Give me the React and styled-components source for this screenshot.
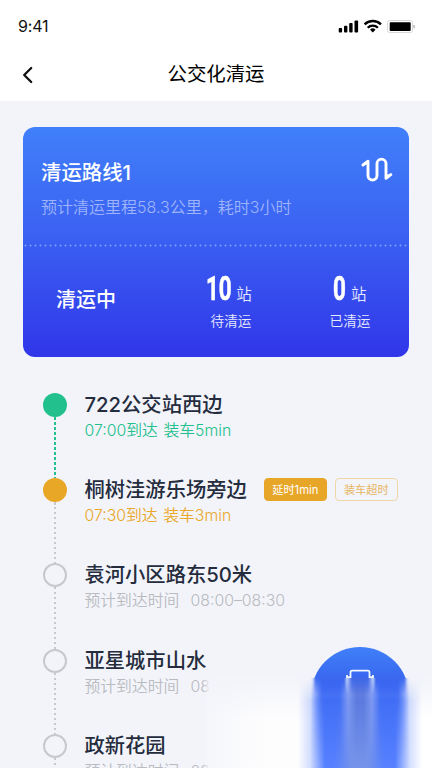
import styled, { createGlobalStyle } from 'styled-components';

const GlobalStyle = createGlobalStyle`
  * {
    box-sizing: border-box;
  }
  body {
    margin: 0;
    background: #f3f4fa;
    font-family: Inter, 'Noto Sans CJK SC', sans-serif;
    overflow: hidden;
  }
`;

const Screen = styled.div`
  position: relative;
  width: 432px;
  height: 768px;
  overflow: hidden;
  background: #f3f4fa;
`;

const Header = styled.header`
  height: 101px;
  background: #fff;
`;

const StatusBar = styled.div`
  display: flex;
  align-items: center;
  justify-content: space-between;
  height: 52px;
  padding: 0 16px 0 18px;
`;

const Clock = styled.span`
  font-size: 16px;
  line-height: 20px;
  letter-spacing: -0.2px;
  color: #111;
`;

const StatusIcons = styled.svg`
  width: 78px;
  height: 16px;
`;

const NavBar = styled.div`
  display: grid;
  grid-template-columns: 56px 1fr 56px;
  align-items: center;
  height: 43px;
`;

const BackIcon = styled.svg`
  width: 14px;
  height: 20px;
  margin: 2px 0 0 21px;
`;

const PageTitle = styled.h1`
  margin: 0;
  font-size: 19.4px;
  line-height: 28px;
  font-weight: 400;
  text-align: center;
  color: #000;
`;

const Card = styled.section`
  width: 386px;
  height: 230px;
  margin: 26px 0 0 23px;
  border-radius: 12px;
  background: linear-gradient(180deg, #4080fa 0%, #3b62f2 45%, #3036e9 100%);
  color: #fff;
`;

const CardTop = styled.div`
  display: flex;
  justify-content: space-between;
  height: 120px;
  padding: 30px 16px 0 18px;
  background: radial-gradient(circle, rgba(160, 190, 255, 0.65) 0.8px, transparent 1.2px)
    0 100% / 5px 3px repeat-x;
`;

const RouteName = styled.h2`
  margin: 0;
  font-size: 20.4px;
  line-height: 31px;
  font-weight: 500;
`;

const RouteDesc = styled.p`
  margin: 7px 0 0;
  font-size: 16px;
  line-height: 24px;
  font-weight: 350;
  color: #9fb4fa;
`;

const RouteIcon = styled.svg`
  width: 32px;
  height: 28px;
`;

const CardBottom = styled.div`
  display: grid;
  grid-template-columns: 148px 120px 118px;
  height: 110px;
`;

const RouteState = styled.div`
  padding: 38px 0 0 33px;
  font-size: 20px;
  line-height: 30px;
  font-weight: 500;
`;

const Stat = styled.div`
  display: flex;
  flex-direction: column;
  align-items: center;
  padding-top: 21px;
`;

const StatValue = styled.div`
  display: flex;
  align-items: baseline;
  height: 40px;
  line-height: 40px;
  margin-left: ${(props) => (props.$wide ? -4 : 0)}px;
`;

const StatNumber = styled.span`
  width: ${(props) => props.$digits * 12.6}px;
  font-family: Roboto, sans-serif;
  font-size: 34px;
  font-weight: 700;
  transform: scaleX(0.66);
  transform-origin: left;
  -webkit-text-stroke: 0.6px #fff;
`;

const StatUnit = styled.span`
  margin-left: 5px;
  font-size: 15.5px;
  font-weight: 350;
  color: #e6eaff;
`;

const StatLabel = styled.div`
  margin-top: 3px;
  font-size: 13.6px;
  line-height: 20px;
  font-weight: 350;
  color: #e6eaff;
`;

const Stops = styled.ul`
  margin: 36px 0 0;
  padding: 0 0 0 43px;
  list-style: none;
`;

const Stop = styled.li`
  display: flex;
  height: 85.2px;
`;

const Rail = styled.div`
  display: flex;
  flex-direction: column;
  align-items: center;
  width: 24px;
  margin-right: 17.5px;
`;

const Dot = styled.div`
  flex: none;
  width: 24px;
  height: 24px;
  border: 2px solid ${(props) => props.$color};
  border-radius: 50%;
  background: ${(props) => (props.$filled ? props.$color : 'transparent')};
`;

const Track = styled.div`
  flex: 1;
  width: 2px;
  background: repeating-linear-gradient(
    180deg,
    ${(props) => props.$color} 0 2.5px,
    transparent 2.5px 5px
  );
`;

const StopBody = styled.div`
  margin-top: -3px;
`;

const StopHead = styled.div`
  display: flex;
  align-items: center;
  height: 29px;
`;

const StopName = styled.h3`
  margin: 0;
  font-size: 20.3px;
  line-height: 29px;
  font-weight: 450;
  color: #242c3d;
  white-space: nowrap;
`;

const StopTime = styled.div`
  font-size: 15.8px;
  line-height: 24px;
  font-weight: 350;
  word-spacing: 1.2px;
  color: ${(props) => props.$color};
  white-space: pre;
`;

const Tag = styled.span`
  display: flex;
  align-items: center;
  justify-content: center;
  width: 63px;
  height: 23px;
  margin: -1px 0 0 ${(props) => (props.$outlined ? 8 : 17)}px;
  border: 1px solid ${(props) => (props.$outlined ? '#f0d5a6' : '#e8a628')};
  border-radius: 4px;
  background: ${(props) => (props.$outlined ? 'transparent' : '#e8a628')};
  color: ${(props) => (props.$outlined ? '#e6b662' : '#fff')};
  font-size: 11.2px;
  font-weight: 400;
`;

// soft cover fading out the lower right part of the list
const Haze = styled.div`
  position: absolute;
  left: 203px;
  top: 676px;
  width: 229px;
  height: 92px;
  background: linear-gradient(90deg, #f6f7fb 4%, #fdfdfe 26%, #fff 100%);
  mask-image: linear-gradient(90deg, transparent 0, #000 7px),
    linear-gradient(180deg, transparent 0, #000 4px);
  mask-composite: intersect;

  &::before {
    content: '';
    display: block;
    height: 44px;
    background: linear-gradient(180deg, #f3f4fa 10%, rgba(243, 244, 250, 0));
  }
`;

const ActionButton = styled.div`
  position: absolute;
  left: 311px;
  top: 647px;
  width: 98px;
  height: 31px;
  overflow: hidden;
`;

const ActionCircle = styled.div`
  display: flex;
  justify-content: center;
  width: 98px;
  height: 98px;
  padding-top: 22px;
  border-radius: 50%;
  background: linear-gradient(180deg, #3f80f7, #3a66f0 34%);
`;

const TruckIcon = styled.svg`
  width: 30px;
  height: 12px;
`;

const Beam = styled.div`
  position: absolute;
  left: 290px;
  top: 678px;
  width: 140px;
  height: 90px;
`;

const BeamLayer = styled.div`
  position: absolute;
  inset: 0;
  background: ${(props) => props.$fill};
  mask-image: ${(props) => props.$mask};
`;

const green = '#22c08c';
const amber = '#e9a727';
const grey = '#c6c8cc';

const stops = [
  { name: '722公交站西边', time: '07:00到达 装车5min', color: green, filled: true },
  {
    name: '桐树洼游乐场旁边',
    time: '07:30到达 装车3min',
    color: amber,
    filled: true,
    tags: ['延时1min', '装车超时'],
  },
  { name: '袁河小区路东50米', time: '预计到达时间  08:00–08:30' },
  { name: '亚星城市山水', time: '预计到达时间  08:00–08:30' },
  { name: '政新花园', time: '预计到达时间  08:00–08:30' },
];

const App = () => {
  return (
    <Screen>
      <GlobalStyle />
      <Header>
        <StatusBar>
          <Clock>9:41</Clock>
          <StatusIcons viewBox="0 0 78 16">
            <g fill="#000">
              <rect x="0.7" y="10" width="3.4" height="4.4" rx="1" />
              <rect x="6" y="7.8" width="3.4" height="6.6" rx="1" />
              <rect x="11.2" y="5" width="3.4" height="9.4" rx="1" />
              <rect x="16.5" y="2.4" width="3.6" height="12" rx="1" />
            </g>
            <g fill="none" stroke="#000" strokeWidth="2.3">
              <path d="M26.6 6.4a11.6 11.6 0 0 1 16.4 0" />
              <path d="M29.7 9.7a7.2 7.2 0 0 1 10.2 0" />
            </g>
            <path d="M34.8 14.4l-2.7-2.7a3.8 3.8 0 0 1 5.4 0z" fill="#000" />
            <rect x="49.5" y="2.5" width="25" height="12" rx="2" fill="none" stroke="#d8d8d8" />
            <rect x="51.7" y="4.2" width="21" height="8.8" rx="0.8" fill="#000" />
            <path d="M76 7v3.2" stroke="#aaa" strokeWidth="1.2" />
          </StatusIcons>
        </StatusBar>
        <NavBar>
          <BackIcon viewBox="0 0 14 20">
            <path
              d="M10.2 3L3.2 10l7 7"
              fill="none"
              stroke="#111"
              strokeWidth="2.3"
              strokeLinecap="round"
              strokeLinejoin="round"
            />
          </BackIcon>
          <PageTitle>公交化清运</PageTitle>
        </NavBar>
      </Header>

      <Card>
        <CardTop>
          <div>
            <RouteName>清运路线1</RouteName>
            <RouteDesc>预计清运里程58.3公里，耗时3小时</RouteDesc>
          </div>
          <RouteIcon viewBox="0 0 32 28">
            <path
              d="M2 8L7 4.2V18.6a4.5 4.5 0 0 0 9 0V6.6a4.5 4.5 0 0 1 9 0v14.8l4.8-3.8"
              fill="none"
              stroke="#fff"
              strokeWidth="2.9"
              strokeLinecap="round"
              strokeLinejoin="round"
            />
            <path d="M3 7.6L7 4.2v3.4zM25 21.4v-3.8h4.2z" fill="#fff" />
          </RouteIcon>
        </CardTop>
        <CardBottom>
          <RouteState>清运中</RouteState>
          <Stat>
            <StatValue $wide>
              <StatNumber $digits={2}>10</StatNumber>
              <StatUnit>站</StatUnit>
            </StatValue>
            <StatLabel>待清运</StatLabel>
          </Stat>
          <Stat>
            <StatValue>
              <StatNumber $digits={1}>0</StatNumber>
              <StatUnit>站</StatUnit>
            </StatValue>
            <StatLabel>已清运</StatLabel>
          </Stat>
        </CardBottom>
      </Card>

      <Stops>
        {stops.map((stop) => (
          <Stop key={stop.name}>
            <Rail>
              <Dot $color={stop.color || grey} $filled={stop.filled} />
              <Track $color={stop.color === green ? green : grey} />
            </Rail>
            <StopBody>
              <StopHead>
                <StopName>{stop.name}</StopName>
                {stop.tags?.map((tag, i) => (
                  <Tag key={tag} $outlined={i === 1}>
                    {tag}
                  </Tag>
                ))}
              </StopHead>
              <StopTime $color={stop.color || '#b9bbc0'}>{stop.time}</StopTime>
            </StopBody>
          </Stop>
        ))}
      </Stops>

      <Haze />
      <Beam>
        <BeamLayer
          $fill="linear-gradient(90deg, rgba(85, 128, 255, 0) 8px, rgba(85, 128, 255, 0.25) 20px, #5580ff 35px, #5580ff 44px, #7593ea 62px, #7593ea 78px, #5580ff 94px, #5580ff 105px, rgba(85, 128, 255, 0.25) 120px, rgba(85, 128, 255, 0) 132px)"
          $mask="linear-gradient(180deg, transparent 0%, #000 25%)"
        />
        <BeamLayer
          $fill="linear-gradient(90deg, rgba(60, 105, 243, 0) 21px, #3c69f3 32px, #3c69f3 50px, #7f9af2 58px, #5875dc 66px, #5875dc 74px, #7f9af2 82px, #3c69f3 90px, #3c69f3 108px, rgba(60, 105, 243, 0) 119px)"
          $mask="linear-gradient(180deg, #000 8%, transparent 95%)"
        />
        <BeamLayer
          $fill="linear-gradient(90deg, rgba(58, 102, 240, 0) 23px, #3a66f0 26px, #3a66f0 54px, #c2d0f8 57px, #3f68e8 62px, #3f68e8 78px, #c2d0f8 83px, #3a66f0 86px, #3a66f0 114px, rgba(58, 102, 240, 0) 117px)"
          $mask="linear-gradient(180deg, #000 0%, transparent 18%)"
        />
      </Beam>
      <ActionButton>
        <ActionCircle>
          <TruckIcon viewBox="0 0 30 12">
            <path
              d="M2 9V6M28 9V6M1.2 8.2h3.8M28.8 8.2h-3.8M5.5 12V3.3a1.6 1.6 0 0 1 1.6-1.6h15.8a1.6 1.6 0 0 1 1.6 1.6V12"
              fill="none"
              stroke="#f0f8ff"
              strokeWidth="1.8"
            />
          </TruckIcon>
        </ActionCircle>
      </ActionButton>
    </Screen>
  );
};

export default App;
